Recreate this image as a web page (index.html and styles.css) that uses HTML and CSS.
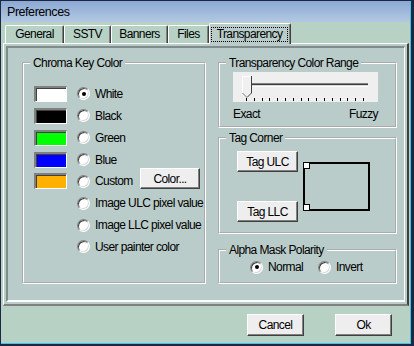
FILE: index.html
```html
<!DOCTYPE html>
<html lang="en">
<head>
  <meta charset="UTF-8">
  <title>Preferences</title>
  <link rel="stylesheet" href="styles.css">
</head>
<body>
  <div class="window">
    <div class="titlebar">Preferences</div>

    <!-- tab strip -->
    <div class="tabs">
      <div class="tab tab-general">General</div>
      <div class="tab tab-sstv">SSTV</div>
      <div class="tab tab-banners">Banners</div>
      <div class="tab tab-files">Files</div>
      <div class="tab tab-active"><span class="focus">Transparency</span></div>
    </div>

    <div class="panel">
      <div class="sheet">
        <fieldset class="group chroma">
          <legend>Chroma Key Color</legend>
          <div class="option-list">
            <div class="option"><span class="swatch swatch-white"></span><span class="radio checked"></span><span class="label">White</span></div>
            <div class="option"><span class="swatch swatch-black"></span><span class="radio"></span><span class="label">Black</span></div>
            <div class="option"><span class="swatch swatch-green"></span><span class="radio"></span><span class="label">Green</span></div>
            <div class="option"><span class="swatch swatch-blue"></span><span class="radio"></span><span class="label">Blue</span></div>
            <div class="option"><span class="swatch swatch-orange"></span><span class="radio"></span><span class="label">Custom</span><button class="btn btn-color">Color...</button></div>
            <div class="option"><span class="swatch-slot"></span><span class="radio"></span><span class="label">Image ULC pixel value</span></div>
            <div class="option"><span class="swatch-slot"></span><span class="radio"></span><span class="label">Image LLC pixel value</span></div>
            <div class="option"><span class="swatch-slot"></span><span class="radio"></span><span class="label">User painter color</span></div>
          </div>
        </fieldset>

        <div class="side">
          <fieldset class="group range">
            <legend>Transparency Color Range</legend>
            <div class="slider">
              <svg width="145" height="30" viewBox="0 0 145 30">
                <rect x="0" y="0" width="145" height="30" fill="#efefef"/>
                <rect x="9" y="11" width="126" height="1" fill="#808080"/>
                <rect x="9" y="12" width="126" height="1" fill="#404040"/>
                <rect x="9" y="13" width="126" height="1" fill="#d8d8d8"/>
                <rect x="9" y="14" width="126" height="1" fill="#ffffff"/>
                <g fill="#000">
                  <rect x="13" y="26" width="1" height="3"/>
                  <rect x="21" y="26" width="1" height="3"/>
                  <rect x="29" y="26" width="1" height="3"/>
                  <rect x="36" y="26" width="1" height="3"/>
                  <rect x="44" y="26" width="1" height="3"/>
                  <rect x="52" y="26" width="1" height="3"/>
                  <rect x="60" y="26" width="1" height="3"/>
                  <rect x="68" y="26" width="1" height="3"/>
                  <rect x="75" y="26" width="1" height="3"/>
                  <rect x="83" y="26" width="1" height="3"/>
                  <rect x="91" y="26" width="1" height="3"/>
                  <rect x="99" y="26" width="1" height="3"/>
                  <rect x="107" y="26" width="1" height="3"/>
                  <rect x="114" y="26" width="1" height="3"/>
                  <rect x="122" y="26" width="1" height="3"/>
                  <rect x="130" y="26" width="1" height="3"/>
                </g>
                <polygon points="9,4 19,4 19,21 14,26 9,21" fill="#f0f0f0"/>
                <polyline points="9.5,21 9.5,4.5 18,4.5" fill="none" stroke="#fff"/>
                <polyline points="18.5,4 18.5,21 14,25.5" fill="none" stroke="#404040"/>
                <polyline points="9.5,21 13.5,25" fill="none" stroke="#808080"/>
              </svg>
            </div>
            <div class="range-labels"><span>Exact</span><span>Fuzzy</span></div>
          </fieldset>

          <fieldset class="group corner">
            <legend>Tag Corner</legend>
            <div class="corner-row">
              <div class="corner-buttons">
                <button class="btn btn-tag">Tag ULC</button>
                <button class="btn btn-tag">Tag LLC</button>
              </div>
              <div class="frame">
                <span class="handle handle-top"></span>
                <span class="handle handle-bottom"></span>
              </div>
            </div>
          </fieldset>

          <fieldset class="group polarity">
            <legend>Alpha Mask Polarity</legend>
            <div class="polarity-row">
              <div class="polarity-option"><span class="radio checked"></span><span class="label">Normal</span></div>
              <div class="polarity-option"><span class="radio"></span><span class="label">Invert</span></div>
            </div>
          </fieldset>
        </div>
      </div>
    </div>

    <div class="actions">
      <button class="btn btn-dialog">Cancel</button>
      <button class="btn btn-dialog">Ok</button>
    </div>
  </div>
</body>
</html>
```

FILE: styles.css
```css
/* colours */
:root {
  --window-bg: #b7d2c5;
  --panel-bg: #b9ccc9;
  --face: #eeeeee;
  --dark: #404040;
  --shadow: #808080;
  --ui-font: "Liberation Sans", Arial, sans-serif;
}

body {
  margin: 0;
  background: #fff;
}

.window {
  width: 414px;
  height: 346px;
  box-sizing: border-box;
  border: 1px solid #1c2740;
  border-right-width: 3px;
  border-bottom-width: 2px;
  padding: 0 1px 1px 0;
  background: var(--window-bg);
  box-shadow: inset -1px -1px #3cc4ec;
  font-family: var(--ui-font);
  font-size: 12px;
  letter-spacing: -0.6px;
  color: #000;
  display: flex;
  flex-direction: column;
}

/* title bar */
.titlebar {
  height: 21px;
  line-height: 22px;
  padding-left: 6px;
  font-size: 12.5px;
  letter-spacing: -0.45px;
  background: linear-gradient(#8ca8d3, #b2c9e2);
}

/* tabs */
.tabs {
  height: 21px;
  display: flex;
  align-items: flex-end;
  margin-left: 4px;
}
.tab {
  height: 18px;
  box-sizing: border-box;
  border-top: 1px solid #fff;
  border-left: 1px solid #fff;
  border-right: 1px solid var(--dark);
  box-shadow: inset -1px 0 var(--shadow);
  border-radius: 2px 2px 0 0;
  text-align: center;
  line-height: 17px;
}
.tab-general { width: 59px; }
.tab-sstv { width: 47px; }
.tab-banners { width: 57px; }
.tab-files { width: 41px; }
.tab-active {
  width: 82px;
  height: 21px;
  margin-bottom: -1px;
  padding: 3px 2px 0 1px;
  background: var(--panel-bg);
  position: relative;
  z-index: 1;
}
.focus {
  display: block;
  height: 15px;
  line-height: 14px;
  outline: 1px dotted #000;
  outline-offset: -1px;
}

/* tab page */
.panel {
  height: 263px;
  box-sizing: border-box;
  margin: 0 1px 0 2px;
  border-style: solid;
  border-width: 1px 2px 2px 1px;
  border-color: #fff var(--dark) var(--shadow) #fff;
  padding: 2px;
  background: var(--panel-bg);
}
.sheet {
  height: 100%;
  box-sizing: border-box;
  border-style: solid;
  border-width: 2px 1px 2px 2px;
  border-color: #7f8c8a #fff #fff #7f8c8a;
  padding: 8px 7px 0 14px;
  display: flex;
  gap: 12px;
}

/* group boxes */
.group {
  margin: 0;
  padding: 0;
  box-sizing: border-box;
  border: 2px groove #fff;
  min-width: 0;
}
.group legend {
  margin-left: 6px;
  padding: 0 3px;
  line-height: 14px;
}

.chroma {
  width: 184px;
  height: 228px;
}
.option-list {
  padding: 13px 4px 0 10px;
}
.option {
  height: 21.86px;
  display: flex;
  align-items: center;
}
.swatch,
.swatch-slot {
  width: 33px;
  height: 16px;
  box-sizing: border-box;
  flex: none;
  margin-right: 10px;
}
.swatch {
  border-style: solid;
  border-width: 2px 1px 1px 2px;
  border-color: var(--shadow) #fff #fff var(--shadow);
  box-shadow: inset 1px 1px var(--dark);
}
.swatch-white { background: #fff; }
.swatch-black { background: #000; }
.swatch-green { background: #00ff00; }
.swatch-blue { background: #0000ff; }
.swatch-orange { background: #ffb000; }

/* radio buttons */
.radio {
  width: 13px;
  height: 13px;
  box-sizing: border-box;
  flex: none;
  border-radius: 50%;
  border: 1px solid;
  border-color: var(--shadow) #fff #fff var(--shadow);
  box-shadow: inset 1px 1px var(--dark), inset -1px -1px #d8d8d8;
  background: #fff;
  margin-right: 5px;
  display: flex;
  align-items: center;
  justify-content: center;
}
.radio.checked::after {
  content: "";
  width: 4px;
  height: 4px;
  border-radius: 50%;
  background: #000;
}
.label {
  white-space: nowrap;
}

/* push buttons */
.btn {
  font: inherit;
  letter-spacing: inherit;
  color: #000;
  background: var(--face);
  border: 1px solid;
  border-color: #fff var(--dark) var(--dark) #fff;
  box-shadow: inset -1px -1px var(--shadow);
  border-radius: 0;
  padding: 0;
  box-sizing: border-box;
}
.btn-color {
  width: 60px;
  height: 21px;
  margin-left: auto;
  margin-bottom: 5px;
}

/* right column */
.side {
  width: 179px;
  display: flex;
  flex-direction: column;
}
.range {
  height: 72px;
}
.slider {
  margin: 2px 0 0 13px;
  height: 30px;
}
.slider svg {
  display: block;
}
.range-labels {
  width: 145px;
  margin: 5px 0 0 13px;
  display: flex;
  justify-content: space-between;
  line-height: 14px;
}

.corner {
  height: 103px;
  margin-top: 3px;
}
.corner-row {
  margin: 6px 0 0 17px;
  height: 71px;
  display: flex;
  align-items: center;
  gap: 5px;
}
.corner-buttons {
  height: 100%;
  display: flex;
  flex-direction: column;
  justify-content: space-between;
}
.btn-tag {
  width: 61px;
  height: 21px;
}
.frame {
  width: 67px;
  height: 49px;
  box-sizing: border-box;
  border: 2px solid #000;
  position: relative;
}
.handle {
  position: absolute;
  left: -2px;
  width: 7px;
  height: 7px;
  box-sizing: border-box;
  border: 1px solid #000;
  background: #fff;
}
.handle-top { top: -2px; }
.handle-bottom { bottom: -2px; }

.polarity {
  height: 41px;
  margin-top: 9px;
}
.polarity-row {
  display: flex;
  padding: 3px 0 0 30px;
  line-height: 14px;
}
.polarity-option {
  width: 68px;
  display: flex;
  align-items: center;
}

/* dialog buttons */
.actions {
  display: flex;
  justify-content: flex-end;
  gap: 31px;
  margin-top: 8px;
  padding-right: 18px;
}
.btn-dialog {
  width: 57px;
  height: 22px;
}
```
